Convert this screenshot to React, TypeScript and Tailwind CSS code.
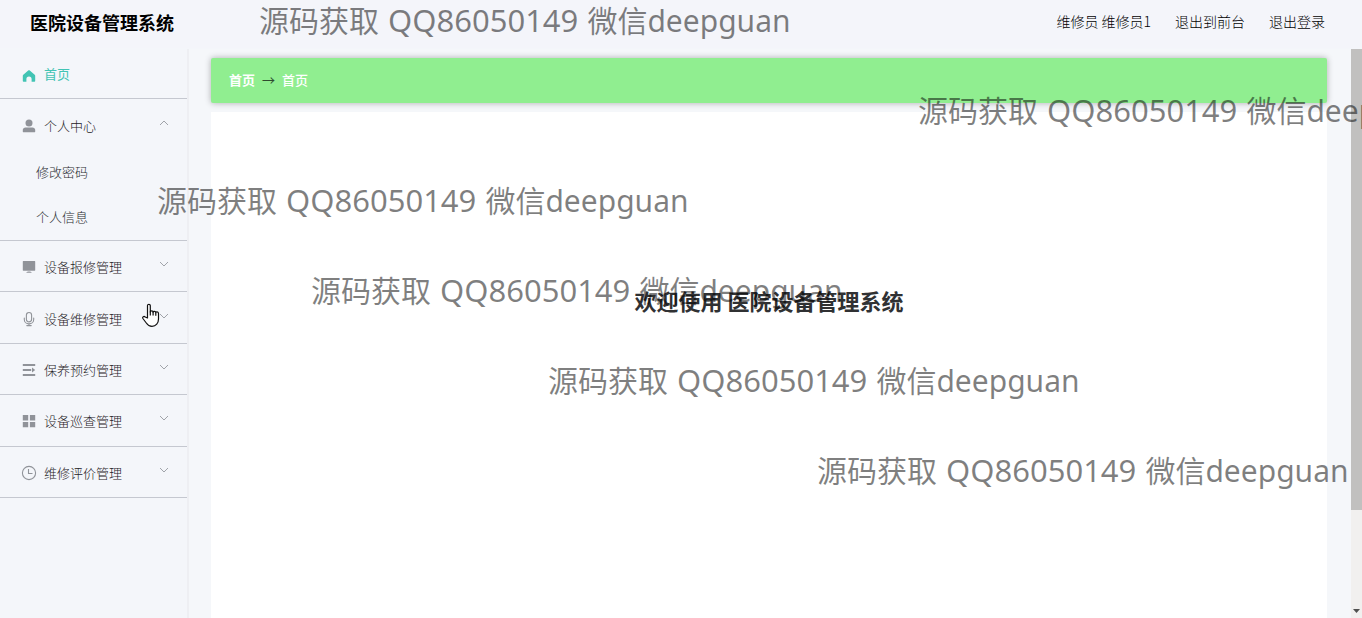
import type { ReactNode } from "react";

const watermarkPlaces = [
  "left-[259px] top-0",
  "left-[918px] top-[90px]",
  "left-[157px] top-[180px]",
  "left-[311px] top-[270px]",
  "left-[548px] top-[360px]",
  "left-[817px] top-[450px]",
];

function Icon({ children }: { children: ReactNode }) {
  return (
    <svg viewBox="0 0 14 14" className="h-3.5 w-3.5 shrink-0 overflow-visible" fill="currentColor" aria-hidden="true">
      {children}
    </svg>
  );
}

const HomeIcon = (
  <Icon>
    <path d="M7 1.200c.3 0 .5.100.8.300l4.900 4.200c.3.300.5.600.5 1v5.100c0 .6-.4 1-1 1H9.600V10a2.600 2.600 0 0 0-5.200 0v2.800H1.800c-.6 0-1-.4-1-1V6.700c0-.4.200-.7.500-1l4.900-4.200c.3-.2.500-.3.800-.3z" />
  </Icon>
);
const UserIcon = (
  <Icon>
    <circle cx="7" cy="3.900" r="3.500" />
    <path d="M.8 12.800v-2c0-1.500 1.200-2.400 2.700-2.400h7c1.500 0 2.700.9 2.700 2.400v2c0 .3-.2.500-.5.500H1.300c-.3 0-.5-.2-.5-.5z" />
  </Icon>
);
const MonitorIcon = (
  <Icon>
    <path d="M1.300 1h11.400c.3 0 .5.200.5.500v8.700c0 .3-.2.500-.5.500H1.300c-.3 0-.5-.2-.5-.5V1.500c0-.3.200-.5.500-.5zM5 11.900c1-.5 3-.5 4 0 .4.200.7.400.7.900H4.300c0-.5.300-.7.700-.9z" />
  </Icon>
);
const MicIcon = (
  <Icon>
    <g fill="none" stroke="currentColor" strokeLinecap="round" strokeWidth="1.100">
      <rect x="4.400" y=".5" width="5.200" height="9.400" rx="2.600" />
      <path d="M2.300 6v1.500c0 2.500 2.100 4.400 4.700 4.400s4.700-1.900 4.700-4.400V6M7 11.900v1.700M4.800 13.600h4.400" />
    </g>
  </Icon>
);
const ListIcon = (
  <Icon>
    <path d="M.8 1h12.400v2H.8zM.8 6h8.400v2H.8zM.8 11h12.400v2H.8zM10 4.600 13.200 7 10 9.400z" />
  </Icon>
);
const GridIcon = (
  <Icon>
    <path d="M.8 1h5.400v5.400H.8zM7.900 1h5.300v5.400H7.900zM.8 7.900h5.400v5.300H.8zM7.900 7.900h5.300v5.300H7.900z" />
  </Icon>
);
const ClockIcon = (
  <Icon>
    <g fill="none" stroke="currentColor" strokeWidth="1.100">
      <circle cx="7" cy="7" r="6.600" />
      <path d="M6.500 3v4.500h4" />
    </g>
  </Icon>
);

function Chevron({ open = false }: { open?: boolean }) {
  return (
    <svg viewBox="0 0 10 6" className="mb-1.5 ml-auto h-1.5 w-2.5" fill="none" stroke="#a0a3a9" aria-hidden="true">
      <path d={open ? "M1 5 5 1l4 4" : "M1 1l4 4 4-4"} />
    </svg>
  );
}

function MenuTitle({ icon, label, open = false }: { icon: ReactNode; label: string; open?: boolean }) {
  return (
    <button type="button" aria-expanded={open} className="flex w-full flex-1 cursor-pointer items-center gap-2 pt-0.5 pr-[18px] pl-[22px] text-[#909399]">
      {icon}
      <span className="text-[#1f2226]">{label}</span>
      <Chevron open={open} />
    </button>
  );
}

const groups = [
  { label: "设备报修管理", icon: MonitorIcon },
  { label: "设备维修管理", icon: MicIcon },
  { label: "保养预约管理", icon: ListIcon },
  { label: "设备巡查管理", icon: GridIcon },
  { label: "维修评价管理", icon: ClockIcon },
];

function Sidebar() {
  return (
    <nav className="w-[189px] shrink-0 border-r-2 border-[#eeeff3] bg-[#f4f6fa] text-[13px] leading-5 font-light">
      <a href="#home" className="flex h-[50px] items-center gap-2 border-b border-[#c5c8d0] pl-[22px] text-[#42c4b4]">
        <span className="pt-1">{HomeIcon}</span>
        <span className="font-normal">首页</span>
      </a>
      <div className="border-b border-[#c5c8d0]">
        <div className="flex h-[51px]">
          <MenuTitle icon={UserIcon} label="个人中心" open />
        </div>
        <ul className="text-[#2a2d31]">
          {["修改密码", "个人信息"].map((label) => (
            <li key={label}>
              <a href="#profile" className="flex h-[45px] items-center pb-0.5 pl-9">{label}</a>
            </li>
          ))}
        </ul>
      </div>
      <ul className="flex h-[257px] flex-col">
        {groups.map((g) => (
          <li key={g.label} className="flex flex-1 border-b border-[#c5c8d0]">
            <MenuTitle icon={g.icon} label={g.label} />
          </li>
        ))}
      </ul>
    </nav>
  );
}

function ScrollBar() {
  return (
    <div className="flex w-[11px] shrink-0 flex-col justify-between bg-[#f1f0ef]" aria-hidden="true">
      <div className="h-[461px] bg-[#c1c0bf]" />
      <svg viewBox="0 0 11 14" className="h-3.5 w-[11px]" fill="#505050">
        <path d="M2 5h7L5.500 9z" />
      </svg>
    </div>
  );
}

export default function App() {
  return (
    <div className="relative flex h-screen flex-col overflow-hidden bg-[#f4f6fa] font-['Noto_Sans_CJK_SC',sans-serif]">
      <header className="flex h-12 shrink-0 items-center justify-between bg-[#f4f5fa] pr-[37px] pb-1 pl-[30px]">
        <h1 className="text-lg font-bold text-black">医院设备管理系统</h1>
        <div className="flex gap-6 pb-0.5 text-sm font-light text-black">
          <span>维修员 维修员1</span>
          <a href="#front">退出到前台</a>
          <a href="#logout">退出登录</a>
        </div>
      </header>

      <div className="flex min-h-0 flex-1 pt-px">
        <Sidebar />
        <main className="flex min-w-0 flex-1 flex-col bg-[#f5f7fa] pt-[9px] pr-6 pl-[22px]">
          <ol className="mb-[9px] flex h-[45px] shrink-0 items-center gap-[7px] rounded-xs bg-[#90ee90] pb-px pl-[18px] text-[13px] text-white shadow-[0_0_6px_rgba(0,0,0,0.3)]">
            <li><a href="#home" className="font-bold">首页</a></li>
            <li aria-hidden="true" className="text-[#2f4a2f]">→</li>
            <li className="font-medium">首页</li>
          </ol>
          <section className="flex-1 bg-white pt-[172px] text-center">
            <h2 className="text-[22px] leading-8 font-bold text-[#303133]">欢迎使用 医院设备管理系统</h2>
          </section>
        </main>
        <ScrollBar />
      </div>

      {watermarkPlaces.map((place) => (
        <p key={place} className={`pointer-events-none absolute font-['Noto_Sans','Noto_Sans_CJK_SC',sans-serif] text-[30px] leading-[42px] whitespace-nowrap text-black/50 ${place}`}>
          源码获取<span className="px-px text-[31px] leading-none"> QQ86050149 </span>微信deepguan
        </p>
      ))}

      <svg viewBox="0 0 18 24" className="pointer-events-none absolute top-[303px] left-[142px] h-6 w-[18px]" fill="#fff" stroke="#111" strokeWidth="1.200" strokeLinejoin="round" aria-hidden="true">
        <path d="M5.500 15V2.600C5.500.9 8.300.9 8.300 2.600V9c0-1.500 2.800-1.500 2.800.2 0-1.300 2.700-1.200 2.700.5 0-1.200 2.700-1 2.700.7V16c0 4-2.500 7.400-6.500 7.400-3 0-4.300-1.200-5.700-3.400L.9 15.500c-.8-1.600 1-2.800 2.300-1.500z" />
        <path d="M8.300 8.500v4M11.100 9v3.500M13.800 9.700v3" fill="none" />
      </svg>
    </div>
  );
}
